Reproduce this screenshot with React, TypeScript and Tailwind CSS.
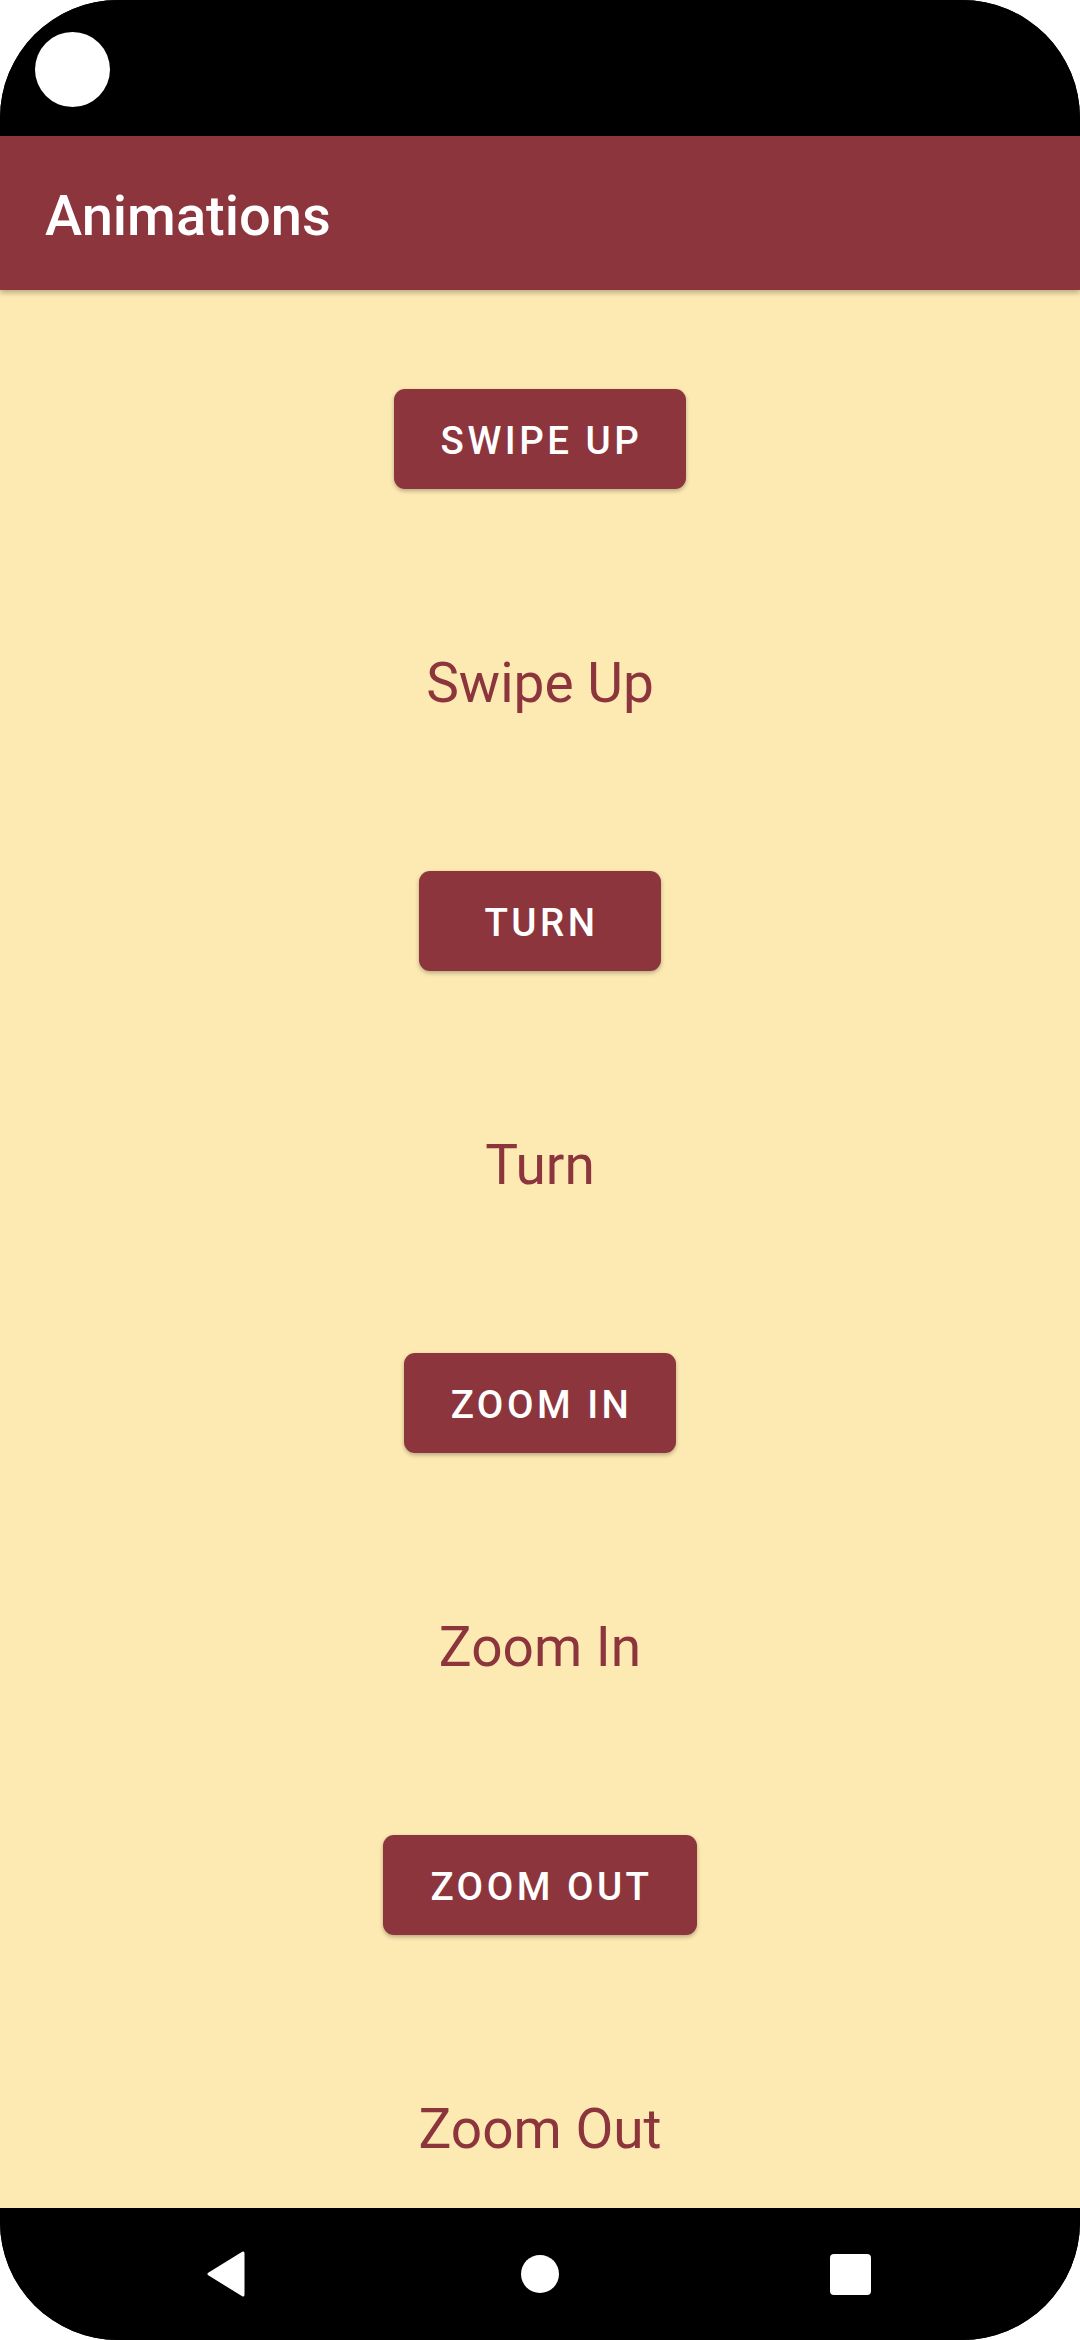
import React from "react";

const items = [
  { btn: "SWIPE UP", label: "Swipe Up" },
  { btn: "TURN", label: "Turn" },
  { btn: "ZOOM IN", label: "Zoom In" },
  { btn: "ZOOM OUT", label: "Zoom Out" },
];

export default function App() {
  return (
    <div className="w-[1080px] h-[2340px] bg-white" style={{ fontFamily: "Roboto, 'Noto Sans', sans-serif" }}>
      <div className="flex h-full w-full flex-col overflow-hidden rounded-[118px] bg-black">
        {/* status bar */}
        <div className="h-[136px] shrink-0 bg-black pl-[35px] pt-[32px]">
          <div className="h-[75px] w-[75px] rounded-full bg-white" />
        </div>
        {/* app bar */}
        <div className="relative z-10 flex h-[154px] shrink-0 items-center bg-[#8c353d] px-[45px] pt-[6px] shadow-[0_3px_5px_rgba(0,0,0,0.25)]">
          <span className="text-[56px] font-medium leading-none text-white">Animations</span>
        </div>
        {/* content */}
        <div className="flex flex-1 flex-col items-center bg-[#fde9b2] pt-[99px]">
          {items.map((it, i) => (
            <div key={i} className={`flex flex-col items-center ${i > 0 ? "mt-[156px]" : ""}`}>
              <div className="flex h-[100px] min-w-[242px] items-center justify-center rounded-[11px] bg-[#8c353d] pl-[47px] pr-[44px] pt-[4px] shadow-[0_2px_4px_rgba(0,0,0,0.28)]">
                <span className="text-[38.5px] font-medium leading-none tracking-[3.5px] text-white">{it.btn}</span>
              </div>
              <div className="mt-[162px] h-[64px] text-[55px] leading-[64px] text-[#8c353d]">{it.label}</div>
            </div>
          ))}
        </div>
        {/* nav bar */}
        <div className="flex h-[132px] shrink-0 items-center bg-black pl-[207px]">
          <svg width="38" height="46" viewBox="0 0 38 46">
            <path d="M36 2 L36 44 L2 23 Z" fill="white" stroke="white" strokeWidth="3" strokeLinejoin="round" />
          </svg>
          <div className="ml-[276px] h-[38px] w-[38px] rounded-full bg-white" />
          <div className="ml-[271px] h-[41px] w-[41px] rounded-[4px] bg-white" />
        </div>
      </div>
    </div>
  );
}
